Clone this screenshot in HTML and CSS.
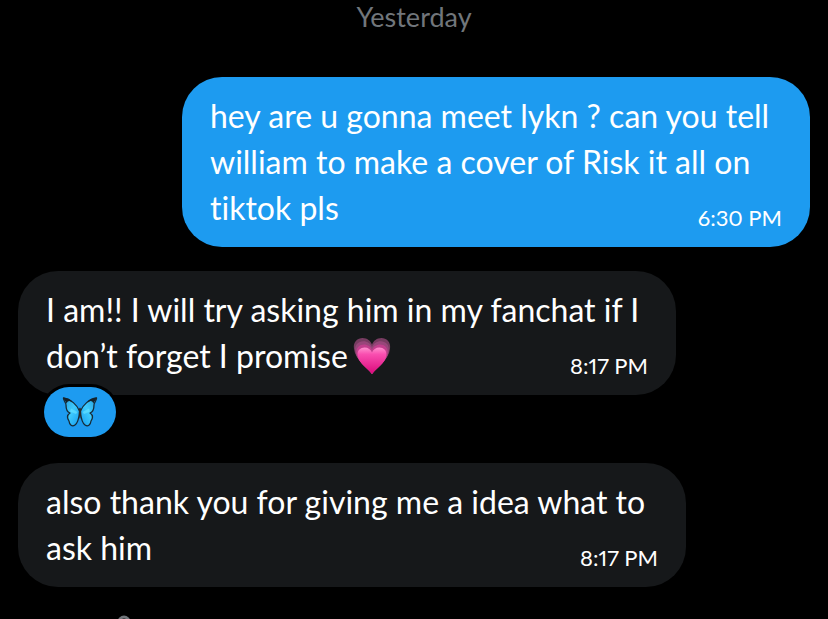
FILE: index.html
```html
<!DOCTYPE html>
<html lang="en">
<head>
<meta charset="utf-8">
<meta name="viewport" content="width=device-width, initial-scale=1">
<title>Messages</title>
<link rel="stylesheet" href="styles.css">
</head>
<body>
<main class="chat">
  <h1 class="day">Yesterday</h1>

  <article class="bubble sent">
    <p class="text">hey are u gonna meet lykn ? can you tell william to make a cover of Risk it all on tiktok pls<time class="time">6:30&#8239;PM</time></p>
  </article>

  <article class="bubble received reacted">
    <p class="text">I am!! I will try asking him in my fanchat if I don’t forget I promise<svg class="heart" viewBox="0 0 40 40" role="img" aria-label="growing heart">
      <defs>
        <linearGradient id="pink" x1="0" y1="0" x2="0" y2="1">
          <stop offset="0" stop-color="#ff8fce"/><stop offset=".25" stop-color="#f94fb0"/><stop offset="1" stop-color="#d9087a"/>
        </linearGradient>
        <path id="h" d="M20 39C15 31 2 24 1 12C0 5 5 1 10 1C15 1 18.500 4 20 8C21.500 4 25 1 30 1C35 1 40 5 39 12C38 24 25 31 20 39Z"/>
      </defs>
      <use href="#h" fill="#773c61"/>
      <use href="#h" fill="#98467a" transform="translate(1.400 3.600) scale(.93 .91)"/>
      <use href="#h" fill="#c23f8d" transform="translate(2.800 7) scale(.86 .82)"/>
      <use href="#h" fill="url(#pink)" transform="translate(4.200 10.400) scale(.79 .735)"/>
    </svg><time class="time">8:17&#8239;PM</time></p>
    <button class="reaction" type="button" aria-label="Butterfly reaction">
      <svg class="butterfly" viewBox="0 0 36 30" aria-hidden="true">
        <defs>
          <linearGradient id="wing" x1="0" y1="0" x2="1" y2="1">
            <stop offset="0" stop-color="#249bdc"/><stop offset=".5" stop-color="#3fcbfd"/><stop offset="1" stop-color="#159df0"/>
          </linearGradient>
          <g id="side">
            <path d="M17.500 14C15 8 9 2 1.500 1C1 3 4 5 4 8C4 12 5 15 8 16C5 18 5 21 7 24C7.500 28 10 30 13 28C16 26 17 20 17.500 16Z" fill="url(#wing)" stroke="#172b37" stroke-width="1.300" stroke-linejoin="round"/>
            <path d="M1 .6C5 .8 8 2.500 10.500 4.600C7.500 3.400 5.500 3.600 4.600 6.500C4 4 1.500 3 1 .6Z" fill="#14222b"/>
            <path d="M15.500 15L9 11.500L8 14.500L14 17Z" fill="#62e0ff" opacity=".7"/>
          </g>
        </defs>
        <use href="#side"/>
        <use href="#side" transform="translate(36 0) scale(-1 1)"/>
        <path d="M18 10.500C16.500 12 16.800 13 17 14C16.500 17 17.300 20 18 22C18.700 20 19.500 17 19 14C19.200 13 19.500 12 18 10.500Z" fill="#2b2b29"/>
      </svg>
    </button>
  </article>

  <article class="bubble received latest">
    <p class="text">also thank you for giving me a idea what to ask him<time class="time">8:17&#8239;PM</time></p>
  </article>

  <footer class="notice">
    <svg class="lock" viewBox="0 0 20 28" aria-hidden="true">
      <path d="M5 12V7a5 5 0 0 1 10 0v5" fill="none" stroke="#71767b" stroke-width="3"/>
      <rect x="1" y="11" width="18" height="15" rx="3" fill="#71767b"/>
    </svg>
  </footer>
</main>
</body>
</html>
```
FILE: styles.css
```css
* {
  box-sizing: border-box;
}

body {
  margin: 0;
  height: 100vh;
  overflow: hidden;
  background: #000;
  color: #fff;
  font-family: Lato, "Liberation Sans", sans-serif;
  font-variant-ligatures: none;
}

.chat {
  display: flex;
  flex-direction: column;
  padding: 0 18px;
}

.day {
  margin: 0 0 43px;
  color: #71767b;
  font-size: 27px;
  font-weight: 400;
  line-height: 34px;
  text-align: center;
}

.bubble {
  position: relative;
  max-width: 100%;
  padding: 16px 28px;
  border-radius: 40px;
}

.sent {
  align-self: flex-end;
  width: 628px;
  background: #1d9bf0;
}

.received {
  align-self: flex-start;
  background: #16181a;
}

.reacted {
  width: 658px;
  margin-top: 24px;
}

.latest {
  width: 668px;
  margin-top: 68px;
}

.text {
  display: flow-root;
  margin: 0;
  font-size: 32px;
  line-height: 46px;
}

.time {
  float: right;
  margin-top: 20px;
  font-size: 22px;
  font-variant-numeric: proportional-nums;
  line-height: 26px;
}

.heart {
  width: 38px;
  height: 38px;
  margin-left: 5px;
  vertical-align: -7px;
}

.reaction {
  position: absolute;
  left: 26px;
  bottom: -42px;
  display: grid;
  place-items: center;
  width: 72px;
  height: 50px;
  padding: 0;
  border: 0;
  border-radius: 25px;
  background: #1d9bf0;
  box-shadow: 0 0 0 3px #000;
}

.butterfly {
  width: 36px;
  height: 30px;
}

.notice {
  display: flex;
  padding: 28px 96px 0;
}

.lock {
  width: 20px;
  height: 28px;
}
```
